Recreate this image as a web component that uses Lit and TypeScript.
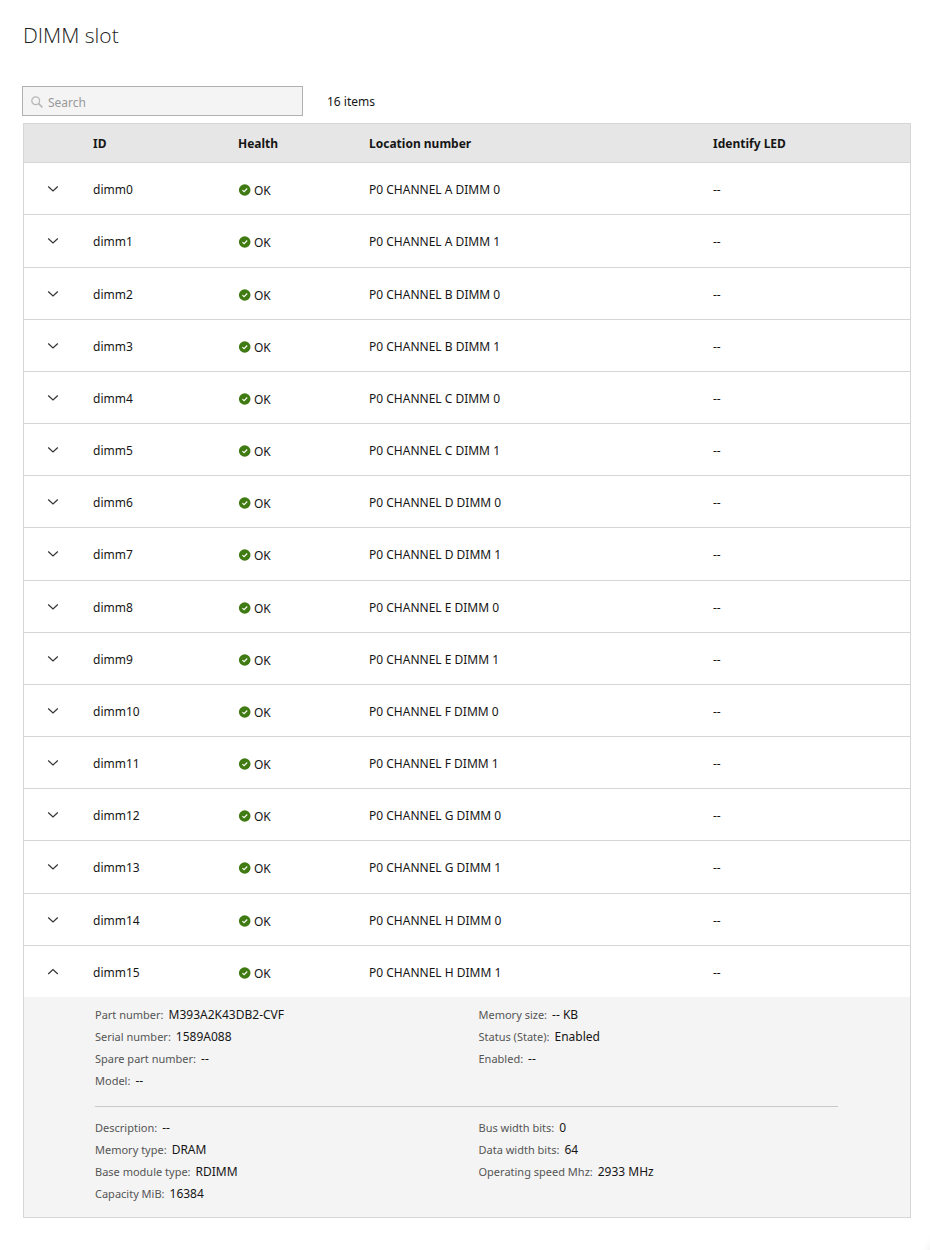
import { LitElement, html, css, svg } from "lit";
import { customElement, property, state } from "lit/decorators.js";

interface Field {
  label: string;
  value: string;
}

interface Dimm {
  id: string;
  health: string;
  location: string;
  led: string;
}

const DIMMS: Dimm[] = Array.from({ length: 16 }, (_, i) => ({
  id: `dimm${i}`,
  health: "OK",
  location: `P0 CHANNEL ${"ABCDEFGH"[i >> 1]} DIMM ${i % 2}`,
  led: "--",
}));

const SUMMARY: Field[][] = [
  [
    { label: "Part number:", value: "M393A2K43DB2-CVF" },
    { label: "Serial number:", value: "1589A088" },
    { label: "Spare part number:", value: "--" },
    { label: "Model:", value: "--" },
  ],
  [
    { label: "Memory size:", value: "-- KB" },
    { label: "Status (State):", value: "Enabled" },
    { label: "Enabled:", value: "--" },
  ],
];

const SPECS: Field[][] = [
  [
    { label: "Description:", value: "--" },
    { label: "Memory type:", value: "DRAM" },
    { label: "Base module type:", value: "RDIMM" },
    { label: "Capacity MiB:", value: "16384" },
  ],
  [
    { label: "Bus width bits:", value: "0" },
    { label: "Data width bits:", value: "64" },
    { label: "Operating speed Mhz:", value: "2933 MHz" },
  ],
];

@customElement("dimm-details")
export class DimmDetails extends LitElement {
  static styles = css`
    :host {
      display: block;
      padding: 7px 72px 12px 71px;
      background: #f4f4f4;
    }
    .group {
      display: grid;
      grid-template-columns: 1fr 1fr;
      column-gap: 24px;
    }
    .group + .group {
      margin-top: 14px;
      padding-top: 10px;
      border-top: 1px solid #c8c8c8;
    }
    .fields {
      margin: 0;
    }
    .field {
      display: flex;
      align-items: baseline;
      gap: 5px;
      line-height: 22px;
    }
    .label {
      font-size: 11px;
      color: #555;
    }
    .value {
      margin: 0;
      font-size: 12px;
      color: #161616;
    }
  `;

  private renderFields(fields: Field[]) {
    return html`<dl class="fields">
      ${fields.map(
        (f) => html`<div class="field">
          <dt class="label">${f.label}</dt>
          <dd class="value">${f.value}</dd>
        </div>`,
      )}
    </dl>`;
  }

  render() {
    return [SUMMARY, SPECS].map(
      (group) => html`<div class="group">${group.map((f) => this.renderFields(f))}</div>`,
    );
  }
}

@customElement("health-status")
export class HealthStatus extends LitElement {
  @property() status = "OK";

  static styles = css`
    :host {
      display: flex;
      align-items: center;
      gap: 3px;
      padding-top: 2px;
    }
    .icon {
      flex: none;
      width: 12px;
      height: 12px;
      margin: 0 0 2px 1px;
    }
  `;

  render() {
    return html`<svg class="icon" viewBox="0 0 12 12" aria-hidden="true">
        <circle cx="5.7" cy="6" r="5.8" fill="#3f7a12"></circle>
        <path d="M3.4 6.1 5.1 7.7 8.2 4.5" fill="none" stroke="#fff" stroke-width="1.1"></path>
      </svg>
      <span>${this.status}</span>`;
  }
}

@customElement("app-root")
export class AppRoot extends LitElement {
  @state() private query = "";
  @state() private open = new Set<string>(["dimm15"]);

  static styles = css`
    :host {
      display: block;
      box-sizing: border-box;
      padding: 19px 19px 32px 23px;
      background: #fff;
      color: #161616;
      font-family: "Noto Sans", "Open Sans", sans-serif;
      font-size: 12px;
      line-height: 18px;
    }
    .title {
      margin: 0;
      font-family: "Open Sans", "Noto Sans", sans-serif;
      font-size: 21px;
      font-weight: 300;
      line-height: 32px;
      color: #222;
    }
    .toolbar {
      display: flex;
      align-items: center;
      gap: 24px;
      margin: 35px 0 7px -1px;
    }
    .count {
      padding-top: 2px;
    }
    .search {
      display: flex;
      align-items: center;
      gap: 5px;
      box-sizing: border-box;
      width: 281px;
      height: 30px;
      padding: 2px 8px 0;
      border: 1px solid #b0b0b0;
      background: #f4f4f4;
    }
    .search-icon {
      flex: none;
      width: 12px;
      height: 12px;
    }
    .search-input {
      flex: 1;
      min-width: 0;
      padding: 2px 0 0;
      border: 0;
      outline: 0;
      background: none;
      color: inherit;
      font: inherit;
    }
    .search-input::placeholder {
      color: #999;
      opacity: 1;
    }
    .table {
      width: 100%;
      table-layout: fixed;
      border: 1px solid #d6d6d6;
      border-spacing: 0;
    }
    .col-toggle {
      width: 69px;
    }
    .col-id {
      width: 145px;
    }
    .col-health {
      width: 131px;
    }
    .col-location {
      width: 344px;
    }
    .col-led {
      width: 197px;
    }
    .head {
      box-sizing: border-box;
      height: 38px;
      padding: 2px 0 0;
      background: #e6e6e6;
      text-align: left;
      font-weight: 700;
    }
    .cell {
      box-sizing: border-box;
      height: 52px;
      padding: 2px 0 0;
      border-top: 1px solid #d6d6d6;
    }
    .cell.control {
      padding: 0;
    }
    .row:nth-child(6n + 2) .cell {
      height: 53px;
    }
    .detail {
      padding: 0;
    }
    .toggle {
      display: flex;
      align-items: center;
      justify-content: center;
      width: 24px;
      height: 24px;
      margin-left: 17px;
      padding: 0;
      border: 0;
      background: none;
      color: #333;
      cursor: pointer;
    }
    .chevron {
      width: 12px;
      height: 12px;
    }
    .fab {
      position: fixed;
      right: -52px;
      bottom: -36px;
      width: 48px;
      height: 48px;
      border-radius: 50%;
      box-shadow: 0 0 14px rgba(0, 0, 0, 0.3);
    }
  `;

  private toggle(id: string) {
    const next = new Set(this.open);
    if (!next.delete(id)) next.add(id);
    this.open = next;
  }

  private renderRow(d: Dimm) {
    const open = this.open.has(d.id);
    const shape = open ? "M1.2 8 6 3.5 10.8 8" : "M1.2 3.5 6 8 10.8 3.5";
    return html`
      <tr class="row">
        <td class="cell control">
          <button
            class="toggle"
            aria-label="Details of ${d.id}"
            aria-expanded=${open ? "true" : "false"}
            @click=${() => this.toggle(d.id)}
          >
            <svg class="chevron" viewBox="0 0 12 12" aria-hidden="true">
              ${svg`<path d=${shape} fill="none" stroke="currentColor" stroke-width="1.2"></path>`}
            </svg>
          </button>
        </td>
        <td class="cell">${d.id}</td>
        <td class="cell"><health-status status=${d.health}></health-status></td>
        <td class="cell">${d.location}</td>
        <td class="cell">${d.led}</td>
      </tr>
      ${open
        ? html`<tr>
            <td class="detail" colspan="5"><dimm-details></dimm-details></td>
          </tr>`
        : null}
    `;
  }

  render() {
    const q = this.query.trim().toLowerCase();
    const rows = DIMMS.filter((d) => `${d.id} ${d.location}`.toLowerCase().includes(q));
    return html`
      <h1 class="title">DIMM slot</h1>
      <div class="toolbar">
        <label class="search">
          <svg class="search-icon" viewBox="0 0 12 12" aria-hidden="true">
            <circle cx="4.7" cy="4.7" r="3.9" fill="none" stroke="#b8b8b8" stroke-width="1.3"></circle>
            <path d="M7.4 7.4 11.4 11.4" stroke="#b8b8b8" stroke-width="1.6"></path>
          </svg>
          <input
            class="search-input"
            type="text"
            placeholder="Search"
            aria-label="Search"
            @input=${(e: Event) => (this.query = (e.target as HTMLInputElement).value)}
          />
        </label>
        <span class="count">${rows.length} items</span>
      </div>
      <table class="table">
        <colgroup>
          <col class="col-toggle" />
          <col class="col-id" />
          <col class="col-health" />
          <col class="col-location" />
          <col class="col-led" />
        </colgroup>
        <thead>
          <tr>
            <th class="head"></th>
            <th class="head" scope="col">ID</th>
            <th class="head" scope="col">Health</th>
            <th class="head" scope="col">Location number</th>
            <th class="head" scope="col">Identify LED</th>
          </tr>
        </thead>
        <tbody>
          ${rows.map((d) => this.renderRow(d))}
        </tbody>
      </table>
      <div class="fab"></div>
    `;
  }
}
